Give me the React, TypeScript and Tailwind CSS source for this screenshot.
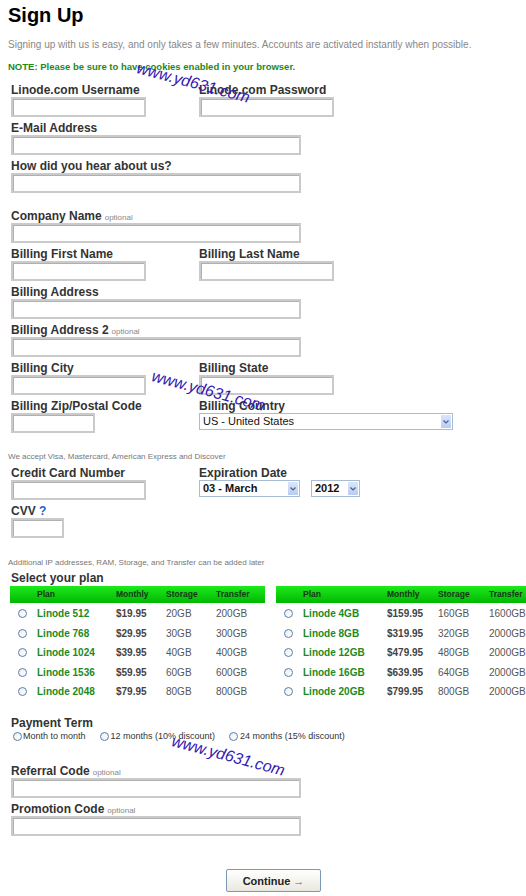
import React from 'react';

const Radio = () => (
  <span className="inline-block w-[9px] h-[9px] rounded-full border border-[#5b7ea6] bg-gradient-to-br from-[#e8eef6] to-white" />
);

const Label = ({ text, optional }: { text: string; optional?: boolean }) => (
  <div className="h-[14px] leading-[14px] text-[12px] font-bold text-[#333] whitespace-nowrap">
    {text}
    {optional && <span className="ml-[3px] text-[8px] font-normal text-[#888]">optional</span>}
  </div>
);

const Input = ({ w }: { w: string }) => (
  <div className={`${w} h-[20px] border-2 border-[#cacaca] bg-white shadow-[inset_1px_1px_0_#b0b0b0]`} />
);

const Field = ({ text, optional, w, children }: { text: string; optional?: boolean; w?: string; children?: React.ReactNode }) => (
  <div className="mb-[4px]">
    <Label text={text} optional={optional} />
    {children ?? <Input w={w ?? 'w-[290px]'} />}
  </div>
);

const Select = ({ value, w, bold }: { value: string; w: string; bold?: boolean }) => (
  <div className={`${w} h-[17px] border border-[#a9bcd6] bg-white flex items-center justify-between pl-[3px] pr-[1px]`}>
    <span className={`text-[11px] text-[#111] ${bold ? 'font-bold' : ''}`}>{value}</span>
    <span className="w-[10px] h-[13px] bg-gradient-to-b from-[#dbe6fb] to-[#b9cdf2] flex items-center justify-center">
      <svg width="6" height="4" viewBox="0 0 6 4">
        <path d="M0.5 0.5 L3 3 L5.5 0.5" fill="none" stroke="#4d6185" strokeWidth="1.2" />
      </svg>
    </span>
  </div>
);

const Row2 = ({ children }: { children: React.ReactNode }) => (
  <div className="grid grid-cols-[188px_auto]">{children}</div>
);

type Plan = [string, string, string, string];

const leftPlans: Plan[] = [
  ['Linode 512', '$19.95', '20GB', '200GB'],
  ['Linode 768', '$29.95', '30GB', '300GB'],
  ['Linode 1024', '$39.95', '40GB', '400GB'],
  ['Linode 1536', '$59.95', '60GB', '600GB'],
  ['Linode 2048', '$79.95', '80GB', '800GB'],
];

const rightPlans: Plan[] = [
  ['Linode 4GB', '$159.95', '160GB', '1600GB'],
  ['Linode 8GB', '$319.95', '320GB', '2000GB'],
  ['Linode 12GB', '$479.95', '480GB', '2000GB'],
  ['Linode 16GB', '$639.95', '640GB', '2000GB'],
  ['Linode 20GB', '$799.95', '800GB', '2000GB'],
];

const PlanTable = ({ plans, cols }: { plans: Plan[]; cols: string }) => (
  <div className="w-[255px] shrink-0">
    <div className={`grid ${cols} h-[17px] items-center bg-gradient-to-b from-[#1cea1c] to-[#00b800] text-[8.5px] font-bold text-[#17361a]`}>
      <span />
      <span>Plan</span>
      <span>Monthly</span>
      <span>Storage</span>
      <span>Transfer</span>
    </div>
    <div className="pt-[1px]">
      {plans.map((p) => (
        <div key={p[0]} className={`grid ${cols} h-[19.5px] items-center text-[10px] whitespace-nowrap`}>
          <span className="flex pl-[8px]"><Radio /></span>
          <span className="font-bold text-[#1c8a1c]">{p[0]}</span>
          <span className="font-bold text-[#444]">{p[1]}</span>
          <span className="text-[#555]">{p[2]}</span>
          <span className="text-[#555]">{p[3]}</span>
        </div>
      ))}
    </div>
  </div>
);

const Watermark = ({ x, y }: { x: number; y: number }) => (
  <div
    className="absolute text-[16px] italic text-[#3419b0] rotate-[15deg] origin-left whitespace-nowrap pointer-events-none"
    style={{ left: x, top: y }}
  >
    www.yd631.com
  </div>
);

export default function App() {
  return (
    <div className="relative w-[526px] min-h-[896px] overflow-hidden bg-white font-['Liberation_Sans',Arial,sans-serif]">
      <div className="pl-[8px] pt-[3px]">
        <h1 className="text-[20px] leading-[24px] font-bold text-black">Sign Up</h1>
        <p className="mt-[12px] text-[10px] leading-[12px] text-[#888]">
          Signing up with us is easy, and only takes a few minutes. Accounts are activated instantly when possible.
        </p>
        <p className="mt-[10px] text-[9.5px] leading-[11px] font-bold text-[#1c8a1c]">
          NOTE: Please be sure to have cookies enabled in your browser.
        </p>
      </div>

      <div className="pl-[11px] mt-[11px]">
        <Row2>
          <Field text="Linode.com Username" w="w-[135px]" />
          <Field text="Linode.com Password" w="w-[135px]" />
        </Row2>
        <Field text="E-Mail Address" />
        <Field text="How did you hear about us?" />

        <div className="mt-[16px]">
          <Field text="Company Name" optional />
        </div>
        <Row2>
          <Field text="Billing First Name" w="w-[135px]" />
          <Field text="Billing Last Name" w="w-[135px]" />
        </Row2>
        <Field text="Billing Address" />
        <Field text="Billing Address 2" optional />
        <Row2>
          <Field text="Billing City" w="w-[135px]" />
          <Field text="Billing State" w="w-[135px]" />
        </Row2>
        <Row2>
          <Field text="Billing Zip/Postal Code" w="w-[84px]" />
          <Field text="Billing Country">
            <Select value="US - United States" w="w-[254px]" />
          </Field>
        </Row2>
      </div>

      <p className="pl-[8px] mt-[15px] text-[8px] leading-[10px] text-[#777]">
        We accept Visa, Mastercard, American Express and Discover
      </p>

      <div className="pl-[11px] mt-[4px]">
        <Row2>
          <Field text="Credit Card Number" w="w-[135px]" />
          <Field text="Expiration Date">
            <div className="flex gap-[11px]">
              <Select value="03 - March" w="w-[101px]" bold />
              <Select value="2012" w="w-[49px]" bold />
            </div>
          </Field>
        </Row2>
        <div className="mb-[4px]">
          <div className="h-[14px] leading-[14px] text-[12px] font-bold text-[#333]">
            CVV <span className="text-[#1d5fd0]">?</span>
          </div>
          <Input w="w-[53px]" />
        </div>
      </div>

      <p className="pl-[8px] mt-[20px] text-[8px] leading-[10px] text-[#777]">
        Additional IP addresses, RAM, Storage, and Transfer can be added later
      </p>

      <div className="pl-[11px] mt-[3px]">
        <Label text="Select your plan" />
      </div>
      <div className="flex gap-[11px] pl-[10px] mt-[1px]">
        <PlanTable plans={leftPlans} cols="grid-cols-[27px_79px_50px_50px_49px]" />
        <PlanTable plans={rightPlans} cols="grid-cols-[27px_84px_51px_51px_42px]" />
      </div>

      <div className="pl-[11px] mt-[14px]">
        <Label text="Payment Term" />
        <div className="flex items-center text-[9px] text-[#333] h-[14px] ml-[2px]">
          <span className="flex items-center gap-[1px]"><Radio />Month to month</span>
          <span className="flex items-center gap-[2px] ml-[14px]"><Radio />12 months (10% discount)</span>
          <span className="flex items-center gap-[2px] ml-[14px]"><Radio />24 months (15% discount)</span>
        </div>

        <div className="mt-[20px]">
          <Field text="Referral Code" optional />
          <div className="mt-[1px]">
            <Field text="Promotion Code" optional />
          </div>
        </div>
      </div>

      <div className="pl-[226px] mt-[32px] pb-[5px]">
        <button className="w-[95px] h-[23px] rounded-[2px] border border-[#7a98b8] bg-gradient-to-b from-white to-[#e9e8e0] text-[11px] font-bold text-[#222]">
          Continue <span className="font-normal text-[#666]">→</span>
        </button>
      </div>

      <Watermark x={137} y={56} />
      <Watermark x={152} y={364} />
      <Watermark x={172} y={729} />
    </div>
  );
}
